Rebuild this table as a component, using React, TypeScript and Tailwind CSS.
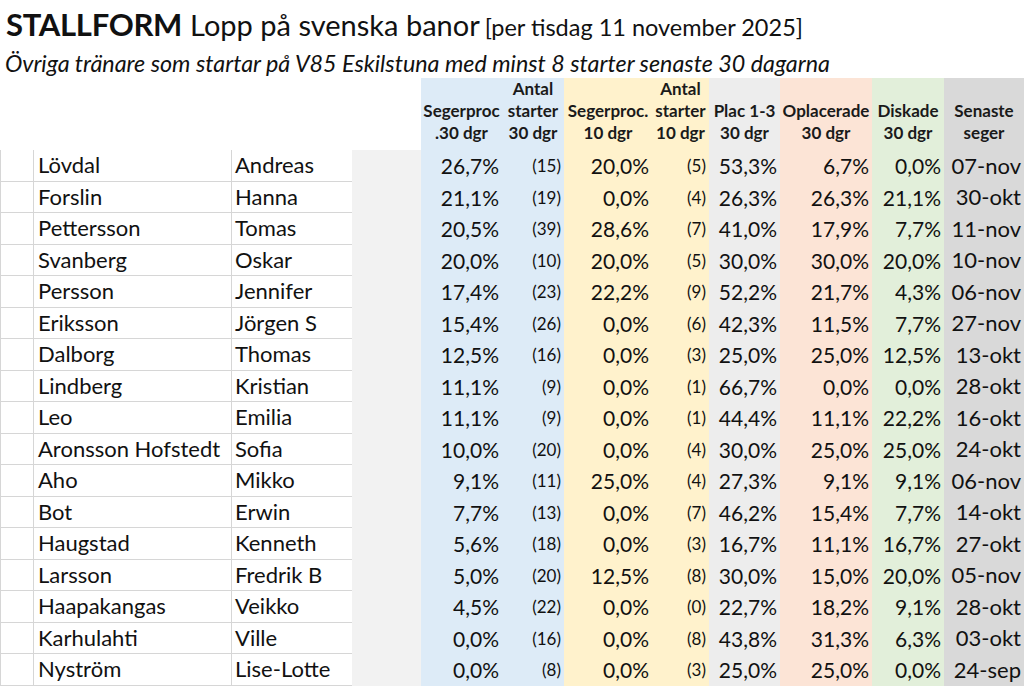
import React from "react";

type Row = [string, string, string, string, string, string, string, string, string, string];

const rows: Row[] = [
  ["Lövdal", "Andreas", "26,7%", "(15)", "20,0%", "(5)", "53,3%", "6,7%", "0,0%", "07-nov"],
  ["Forslin", "Hanna", "21,1%", "(19)", "0,0%", "(4)", "26,3%", "26,3%", "21,1%", "30-okt"],
  ["Pettersson", "Tomas", "20,5%", "(39)", "28,6%", "(7)", "41,0%", "17,9%", "7,7%", "11-nov"],
  ["Svanberg", "Oskar", "20,0%", "(10)", "20,0%", "(5)", "30,0%", "30,0%", "20,0%", "10-nov"],
  ["Persson", "Jennifer", "17,4%", "(23)", "22,2%", "(9)", "52,2%", "21,7%", "4,3%", "06-nov"],
  ["Eriksson", "Jörgen S", "15,4%", "(26)", "0,0%", "(6)", "42,3%", "11,5%", "7,7%", "27-nov"],
  ["Dalborg", "Thomas", "12,5%", "(16)", "0,0%", "(3)", "25,0%", "25,0%", "12,5%", "13-okt"],
  ["Lindberg", "Kristian", "11,1%", "(9)", "0,0%", "(1)", "66,7%", "0,0%", "0,0%", "28-okt"],
  ["Leo", "Emilia", "11,1%", "(9)", "0,0%", "(1)", "44,4%", "11,1%", "22,2%", "16-okt"],
  ["Aronsson Hofstedt", "Sofia", "10,0%", "(20)", "0,0%", "(4)", "30,0%", "25,0%", "25,0%", "24-okt"],
  ["Aho", "Mikko", "9,1%", "(11)", "25,0%", "(4)", "27,3%", "9,1%", "9,1%", "06-nov"],
  ["Bot", "Erwin", "7,7%", "(13)", "0,0%", "(7)", "46,2%", "15,4%", "7,7%", "14-okt"],
  ["Haugstad", "Kenneth", "5,6%", "(18)", "0,0%", "(3)", "16,7%", "11,1%", "16,7%", "27-okt"],
  ["Larsson", "Fredrik B", "5,0%", "(20)", "12,5%", "(8)", "30,0%", "15,0%", "20,0%", "05-nov"],
  ["Haapakangas", "Veikko", "4,5%", "(22)", "0,0%", "(0)", "22,7%", "18,2%", "9,1%", "28-okt"],
  ["Karhulahti", "Ville", "0,0%", "(16)", "0,0%", "(8)", "43,8%", "31,3%", "6,3%", "03-okt"],
  ["Nyström", "Lise-Lotte", "0,0%", "(8)", "0,0%", "(3)", "25,0%", "25,0%", "0,0%", "24-sep"],
];

const grid =
  "grid grid-cols-[34px_198px_120px_69px_81px_62px_88px_57px_71px_92px_72px_80px]";

const bgs = [
  "bg-[#ddebf7]",
  "bg-[#ddebf7]",
  "bg-[#fff2cc]",
  "bg-[#fff2cc]",
  "bg-[#ededed]",
  "bg-[#fce4d6]",
  "bg-[#e2efda]",
  "bg-[#d9d9d9]",
];

const headers: string[][] = [
  ["Segerproc", ".30 dgr"],
  ["Antal", "starter", "30 dgr"],
  ["Segerproc.", "10 dgr"],
  ["Antal", "starter", "10 dgr"],
  ["Plac 1-3", "30 dgr"],
  ["Oplacerade", "30 dgr"],
  ["Diskade", "30 dgr"],
  ["Senaste", "seger"],
];

const sizes = [
  "text-[21px]",
  "text-[17px]",
  "text-[21px]",
  "text-[17px]",
  "text-[21px]",
  "text-[21px]",
  "text-[21px]",
  "text-[22px]",
];

export default function App() {
  return (
    <div className="w-[1024px] h-[687px] overflow-hidden bg-white text-[#111] font-['Lato',sans-serif]">
      <div className="h-[42px] flex items-baseline pl-[6px] pt-[6px] leading-[36px] whitespace-nowrap">
        <span className="text-[31px] font-bold tracking-[-0.3px]">STALLFORM</span>
        <span className="text-[29px] ml-[8px]">Lopp på svenska banor</span>
        <span className="text-[23.5px] ml-[5px]">[per tisdag 11 november 2025]</span>
      </div>
      <div className="h-[27px] pl-[5px] mt-[8px] text-[23.3px] italic leading-[27px] whitespace-nowrap">
        Övriga tränare som startar på V85 Eskilstuna med minst 8 starter senaste 30 dagarna
      </div>
      <div className="mt-[1px]">
        <div className={`${grid} h-[72px]`}>
          <div />
          <div />
          <div />
          <div />
          {headers.map((h, i) => (
            <div
              key={i}
              className={`${bgs[i]} flex flex-col justify-end items-center pb-[6px] border-b border-[#4a4a4a] text-[17px] font-bold leading-[22px] text-[#1a1a1a] whitespace-nowrap`}
            >
              {h.map((l, j) => (
                <span key={j}>{l}</span>
              ))}
            </div>
          ))}
        </div>
        {rows.map((r, ri) => (
          <div key={ri} className={`${grid} h-[31.5px] leading-none whitespace-nowrap`}>
            <div className="border-l border-r border-b border-[#d6d6d6]" />
            <div className="border-r border-b border-[#d6d6d6] flex items-center pl-[4px] text-[22px]">
              {r[0]}
            </div>
            <div className="border-b border-[#d6d6d6] flex items-center pl-[3px] text-[22px]">{r[1]}</div>
            <div className="bg-[#f2f2f2]" />
            {r.slice(2).map((v, i) => (
              <div key={i} className={`${bgs[i]} ${sizes[i]} flex items-center justify-end pr-[3px]`}>
                {v}
              </div>
            ))}
          </div>
        ))}
      </div>
    </div>
  );
}
